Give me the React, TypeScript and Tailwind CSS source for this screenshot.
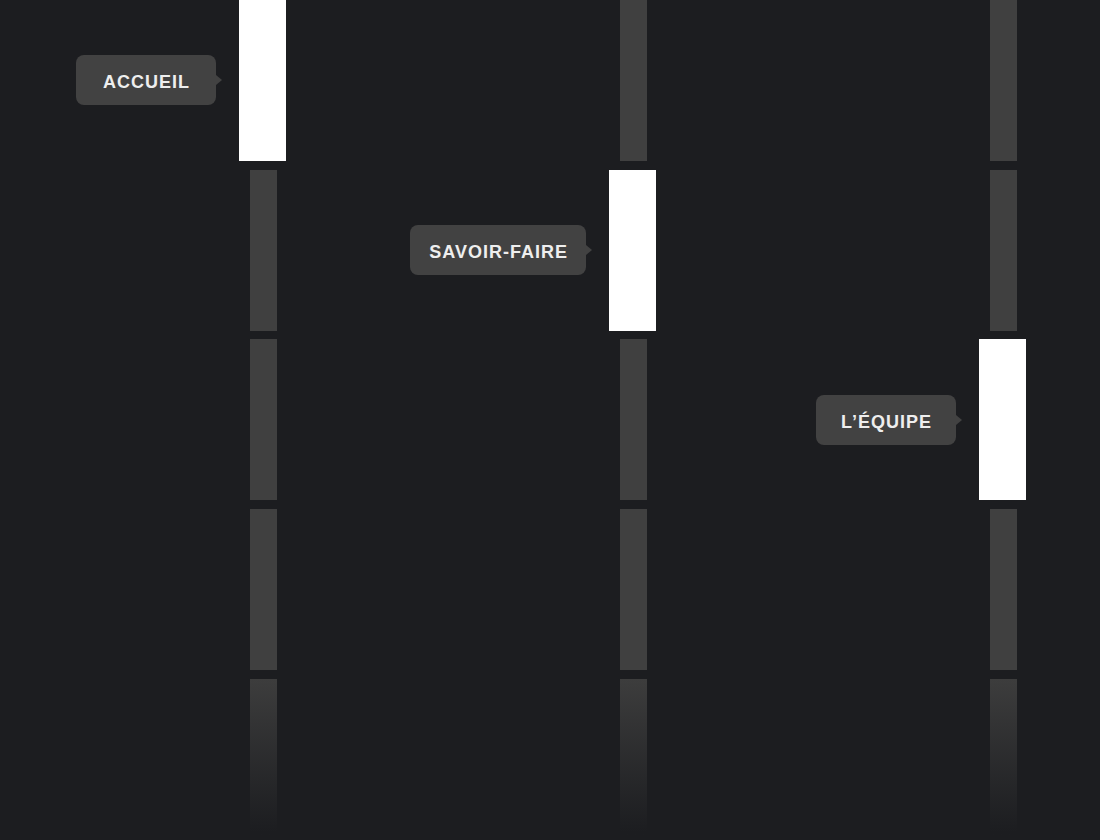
import React from "react";

const columns = [
  { label: "ACCUEIL", active: 0 },
  { label: "SAVOIR-FAIRE", active: 1 },
  { label: "L\u2019ÉQUIPE", active: 2 },
];

function Tooltip({ label }: { label: string }) {
  return (
    <div className="absolute right-full top-1/2 mr-[23px] -translate-y-1/2">
      <div className="relative flex h-[50px] min-w-[140px] items-center justify-center rounded-[8px] bg-[#424242] px-[18px]">
        <span className="whitespace-nowrap pt-[5px] pl-[1px] text-[18px] font-bold tracking-[1px] text-[#eeeeee] [font-family:'Liberation_Sans',Arial,sans-serif]">
          {label}
        </span>
        <span className="absolute left-full top-1/2 -translate-y-1/2 border-y-[5px] border-l-[6px] border-y-transparent border-l-[#424242]" />
      </div>
    </div>
  );
}

function Column({ label, active }: { label: string; active: number }) {
  return (
    <div className="-mt-[0.3px] flex w-[47px] flex-col items-start gap-[8.8px]">
      {[0, 1, 2, 3, 4].map((i) => {
        if (i === active) {
          return (
            <div key={i} className="relative h-[161px] w-[47px] shrink-0 bg-white">
              <Tooltip label={label} />
            </div>
          );
        }
        if (i === 4) {
          return (
            <div
              key={i}
              className="ml-[11px] h-[161px] w-[27px] shrink-0 bg-gradient-to-b from-[#3d3d3d] to-[#1c1d20] to-95%"
            />
          );
        }
        return <div key={i} className="ml-[11px] h-[161px] w-[27px] shrink-0 bg-[#404040]" />;
      })}
    </div>
  );
}

export default function App() {
  return (
    <div className="h-[840px] w-full overflow-hidden bg-[#1c1d20]">
      <div className="flex gap-[323px] pl-[239px]">
        {columns.map((c) => (
          <Column key={c.label} label={c.label} active={c.active} />
        ))}
      </div>
    </div>
  );
}
